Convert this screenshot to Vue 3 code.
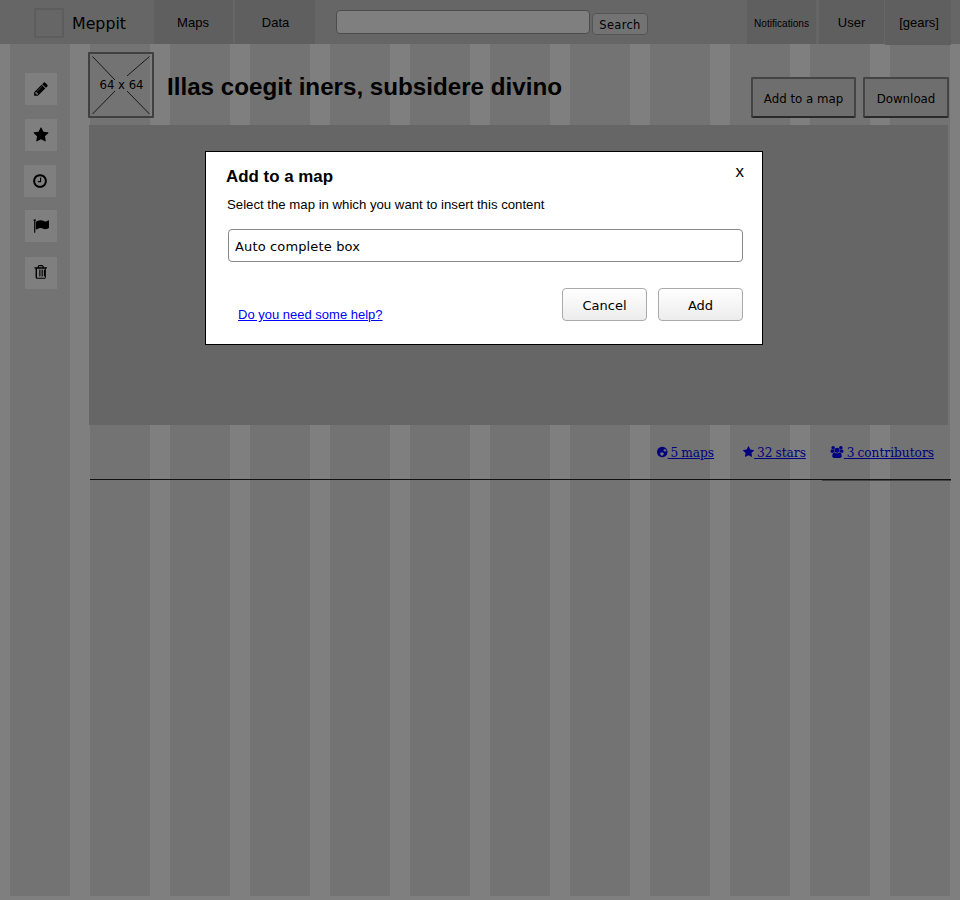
<script setup>
const tools = [
  { k: 'pencil', vb: '0 0 1792 1792', d: 'M491 1536l91-91-235-235-91 91v107h128v128h107zm523-928q0-22-22-22-10 0-17 7l-542 542q-7 7-7 17 0 22 22 22 10 0 17-7l542-542q7-7 7-17zm-54-192l416 416-832 832h-416v-416zm683 96q0 53-37 90l-166 166-416-416 166-165q36-38 90-38 53 0 91 38l235 234q37 39 37 91z' },
  { k: 'star', vb: '0 0 1792 1792', d: 'M1728 647q0 22-26 48l-363 354 86 500q1 7 1 20 0 21-10.500 35.500t-30.500 14.500q-19 0-40-12l-449-236-449 236q-22 12-40 12-21 0-31.500-14.500t-10.500-35.500q0-6 2-20l86-500-364-354q-25-27-25-48 0-37 56-46l502-73 225-455q19-41 49-41t49 41l225 455 502 73q56 9 56 46z' },
  { k: 'clock', vb: '0 0 1792 1792', d: 'M1024 544v448q0 14-9 23t-23 9h-320q-14 0-23-9t-9-23v-64q0-14 9-23t23-9h224v-352q0-14 9-23t23-9h64q14 0 23 9t9 23zm416 352q0-148-73-273t-198-198-273-73-273 73-198 198-73 273 73 273 198 198 273 73 273-73 198-198 73-273zm224 0q0 209-103 385.500t-279.500 279.500-385.500 103-385.500-103-279.500-279.500-103-385.500 103-385.500 279.500-279.500 385.500-103 385.500 103 279.500 279.500 103 385.500z' },
  { k: 'flag', vb: '0 0 1792 1792', d: 'M320 256q0 72-64 110v1266q0 13-9.500 22.500t-22.500 9.500h-64q-13 0-22.500-9.500t-9.500-22.500v-1266q-64-38-64-110 0-53 37.500-90.500t90.500-37.500 90.500 37.500 37.500 90.500zm1472 64v763q0 25-12.500 38.500t-39.500 27.500q-215 116-369 116-61 0-123.500-22t-108.500-48-115.500-48-142.500-22q-192 0-464 146-17 9-33 9-26 0-45-19t-19-45v-742q0-32 31-55 21-14 79-43 236-120 421-120 107 0 200 29t219 88q38 19 88 19 54 0 117.500-21t110-47 88-47 54.500-21q26 0 45 19t19 45z' },
  { k: 'trash', vb: '-192 0 1792 1792', d: 'M512 1248v-704q0-14 9-23t23-9h64q14 0 23 9t9 23v704q0 14-9 23t-23 9h-64q-14 0-23-9t-9-23zm256 0v-704q0-14 9-23t23-9h64q14 0 23 9t9 23v704q0 14-9 23t-23 9h-64q-14 0-23-9t-9-23zm256 0v-704q0-14 9-23t23-9h64q14 0 23 9t9 23v704q0 14-9 23t-23 9h-64q-14 0-23-9t-9-23zm-576-992h448l-48-117q-7-9-17-11h-317q-10 2-17 11zm928 32v64q0 14-9 23t-23 9h-96v948q0 83-47 143.500t-113 60.500h-832q-66 0-113-58.500t-47-141.500v-952h-96q-14 0-23-9t-9-23v-64q0-14 9-23t23-9h309l70-167q15-37 54-63t79-26h320q40 0 79 26t54 63l70 167h309q14 0 23 9t9 23zM256 416v948q0 22 7 40.500t14.500 27 10.500 8.500h832q3 0 10.500-8.500t14.500-27 7-40.500v-948z' }
]
const stats = [
  { k: 'globe', label: '5 maps', w: 10.5, h: 12, vb: '128 128 1536 1536', d: 'M896 128q209 0 385.500 103t279.500 279.500 103 385.500-103 385.500-279.500 279.500-385.500 103-385.500-103-279.500-279.500-103-385.500 103-385.500 279.500-279.500 385.500-103zM1100 1050l-200 -120 -260 60 -90 190 210 240 150 90 60 -160 170 -140zM1250 480l-130 80 -40 170 180 110 180 -60 100 -60q-60 -160 -180 -240z' },
  { k: 'star', label: '32 stars', w: 11, h: 12, vb: '64 128 1664 1536', d: 'M1728 647q0 22-26 48l-363 354 86 500q1 7 1 20 0 21-10.500 35.500t-30.500 14.500q-19 0-40-12l-449-236-449 236q-22 12-40 12-21 0-31.500-14.500t-10.500-35.500q0-6 2-20l86-500-364-354q-25-27-25-48 0-37 56-46l502-73 225-455q19-41 49-41t49 41l225 455 502 73q56 9 56 46z' },
  { k: 'group', label: '3 contributors', w: 14, h: 12, vb: '-64 0 1920 1792', d: 'M529 896q-162 5-265 128h-134q-82 0-138-40.500t-56-118.500q0-353 124-353 6 0 43.500 21t97.500 42.500 119 21.500q67 0 133-23-5 37-5 66 0 139 81 256zm1071 637q0 120-73 189.500t-194 69.500h-874q-121 0-194-69.500t-73-189.500q0-53 3.500-103.500t14-109 26.500-108.500 43-97.500 62-81 85.500-53.500 111.500-20q10 0 43 21.500t73 48 107 48 135 21.500 135-21.500 107-48 73-48 43-21.500q61 0 111.500 20t85.500 53.500 62 81 43 97.500 26.500 108.500 14 109 3.500 103.500zm-1024-1277q0 106-75 181t-181 75-181-75-75-181 75-181 181-75 181 75 75 181zm704 384q0 159-112.500 271.500t-271.500 112.500-271.500-112.500-112.500-271.500 112.500-271.500 271.500-112.500 271.500 112.500 112.500 271.500zm576 225q0 78-56 118.500t-138 40.500h-134q-103-123-265-128 81-117 81-256 0-29-5-66 66 23 133 23 59 0 119-21.500t97.500-42.500 43.500-21q124 0 124 353zm-128-609q0 106-75 181t-181 75-181-75-75-181 75-181 181-75 181 75 75 181z' }
]
</script>

<template>
  <div class="page">
    <header class="topbar">
      <div class="logo"></div>
      <span class="brand">Meppit</span>
      <nav class="mainnav">
        <a class="tab tab-maps">Maps</a>
        <a class="tab tab-data">Data</a>
      </nav>
      <form class="search" @submit.prevent>
        <input class="search-input" type="text" />
        <button class="search-btn">Search</button>
      </form>
      <nav class="usernav">
        <a class="tab tab-notif">Notifications</a>
        <a class="tab tab-user">User</a>
        <a class="tab tab-gears">[gears]</a>
      </nav>
    </header>

    <div class="body">
      <aside class="tools">
        <div v-for="t in tools" :key="t.k" class="tool" :class="'tool-' + t.k">
          <svg width="16" height="16" :viewBox="t.vb"><path :d="t.d" fill="#000" fill-rule="evenodd" /></svg>
        </div>
      </aside>

      <main class="main">
        <div class="head">
          <div class="thumb">
            <svg class="thumb-x" width="62" height="62" viewBox="0 0 62 62">
              <path d="M2.500 2.500 L25 26 M59.500 2.500 L37 22 M25 37 L2.500 60 M37 37 L59.500 60" stroke="#333" stroke-width="1" fill="none" />
            </svg>
            <span>64 x 64</span>
          </div>
          <h1 class="title">Illas coegit iners, subsidere divino</h1>
          <div class="actions">
            <button class="sketch sketch-add">Add to a map</button>
            <button class="sketch sketch-dl">Download</button>
          </div>
        </div>
        <div class="panel"></div>
        <div class="stats">
          <a v-for="s in stats" :key="s.k" href="#" class="stat" :class="'stat-' + s.k">
            <svg :width="s.w" :height="s.h" :viewBox="s.vb"><path :d="s.d" fill="#00f" fill-rule="evenodd" /></svg>
            {{ s.label }}
          </a>
        </div>
        <hr class="rule" />
      </main>
    </div>

    <div class="overlay">
      <section class="modal">
        <div class="modal-head">
          <h2 class="modal-title">Add to a map</h2>
          <span class="close">x</span>
        </div>
        <p class="modal-text">Select the map in which you want to insert this content</p>
        <div class="auto">Auto complete box</div>
        <div class="modal-foot">
          <a href="#" class="help">Do you need some help?</a>
          <div class="modal-btns">
            <button class="mbtn">Cancel</button>
            <button class="mbtn">Add</button>
          </div>
        </div>
      </section>
    </div>
  </div>
</template>

<style>
html, body { margin: 0; background: #fff; }
</style>

<style scoped>
.page {
  position: relative;
  width: 960px;
  height: 900px;
  overflow: hidden;
  font-family: "Liberation Sans", Arial, sans-serif;
  background-color: #fff;
  background-image: linear-gradient(90deg, #fff 0, #fff 10px, #e6e6e6 10px, #e6e6e6 70px, #fff 70px, #fff 80px);
  background-size: 80px 852px;
  background-position: 0 44px;
  background-repeat: repeat-x;
}
.topbar {
  display: flex;
  align-items: flex-start;
  height: 44px;
  background: #ccc;
}
.logo {
  width: 26px;
  height: 26px;
  margin: 8px 0 0 34px;
  border: 2px solid #bbb;
}
.brand {
  margin: 14px 0 0 8px;
  width: 82px;
  font: 15.8px "DejaVu Sans", sans-serif;
  line-height: 20px;
}
.mainnav { display: flex; gap: 2px; }
.usernav { display: flex; gap: 3px; margin-left: 99px; }
.tab {
  display: block;
  box-sizing: border-box;
  height: 44px;
  line-height: 45px;
  text-align: center;
  font-size: 13px;
  background: #bebebe;
  color: #000;
}
.tab-maps { width: 79px; padding-right: 1px; }
.tab-data { width: 80px; padding-left: 1px; }
.tab-notif { width: 69px; font-size: 10.1px; line-height: 47px; }
.tab-user { width: 65px; }
.tab-gears { width: 66px; height: 45px; margin-left: -2px; padding-left: 2px; }
.search { display: flex; align-items: flex-start; margin-left: 21px; gap: 2px; }
.search-input {
  box-sizing: border-box;
  width: 254px;
  height: 24px;
  margin-top: 10px;
  padding: 0;
  background: #fff;
  border: 1px solid #999;
  border-radius: 4px;
}
.search-btn {
  box-sizing: border-box;
  width: 56px;
  height: 22px;
  margin-top: 13px;
  padding: 2px 0 0;
  font: 11.5px "DejaVu Sans", sans-serif;
  letter-spacing: .3px;
  color: #000;
  background: #e6e6e6;
  border: 1px solid #aaa;
  border-radius: 4px;
}
.body { display: flex; }
.tools {
  display: flex;
  flex-direction: column;
  width: 88px;
  padding-top: 29px;
  box-sizing: border-box;
  flex: none;
}
.tool {
  display: flex;
  align-items: center;
  justify-content: center;
  width: 32px;
  height: 32px;
  margin: 0 0 14px 25px;
  background: #fff;
}
.tool-clock { margin-left: 24px; }
.tool-flag { margin-top: -1px; }
.tool-trash { margin-top: 1px; }
.main { width: 864px; flex: none; }
.head {
  display: flex;
  align-items: flex-start;
  height: 81px;
}
.thumb {
  position: relative;
  box-sizing: border-box;
  width: 66px;
  height: 66px;
  margin-top: 8px;
  border: 2px solid #808080;
  border-radius: 1px;
  display: flex;
  align-items: center;
  justify-content: center;
  padding-left: 1px;
}
.thumb-x { position: absolute; left: 0; top: 0; }
.thumb span {
  position: relative;
  font: 13px "DejaVu Sans Condensed", "DejaVu Sans", sans-serif;
  line-height: 16px;
  color: #000;
  white-space: nowrap;
}
.title {
  margin: 29px 0 0 13px;
  width: 584px;
  font-size: 24.18px;
  line-height: 28px;
  font-weight: bold;
  white-space: nowrap;
  color: #000;
}
.actions { display: flex; gap: 7px; margin-top: 33px; }
.sketch {
  box-sizing: border-box;
  height: 41px;
  padding: 2px 0 0;
  font: 11.8px "DejaVu Sans", sans-serif;
  background: #ddd;
  color: #000;
  border: 2px solid #888;
  border-bottom-color: #555;
  border-radius: 2px;
}
.sketch-add { width: 105px; }
.sketch-dl { width: 86px; }
.panel {
  width: 859px;
  height: 300px;
  margin-left: 1px;
  background: #ccc;
}
.stats {
  display: flex;
  justify-content: flex-end;
  gap: 24px;
  height: 54px;
  width: 846px;
  padding-top: 21px;
  box-sizing: border-box;
}
.stat {
  font: 12.2px "DejaVu Serif", serif;
  line-height: 15px;
  word-spacing: -1px;
  color: #00f;
  white-space: nowrap;
}
.stat-star { margin-left: 5px; }
.stat svg { vertical-align: -1px; }
.rule {
  width: 861px;
  height: 2px;
  margin: 0 0 0 2px;
  border: 0;
  background:
    linear-gradient(#222, #222) 0 0 / 100% 1px no-repeat,
    linear-gradient(90deg, transparent 85%, #888 85%) 0 1px / 100% 1px no-repeat;
}
.overlay {
  position: absolute;
  inset: 0;
  background: rgba(0, 0, 0, .5);
}
.modal {
  position: absolute;
  left: 205px;
  top: 151px;
  box-sizing: border-box;
  width: 558px;
  height: 194px;
  padding: 0 19px 0 20px;
  background: #fff;
  border: 1px solid #000;
  color: #000;
}
.modal-head {
  display: flex;
  justify-content: space-between;
  align-items: flex-start;
  height: 44px;
}
.modal-title {
  margin: 15px 0 0;
  font-size: 16.9px;
  line-height: 20px;
  font-weight: bold;
}
.close { margin: 10px -1px 0 0; font-size: 17px; line-height: 20px; }
.modal-text {
  margin: 0 0 0 1px;
  font-size: 13.2px;
  line-height: 18px;
  height: 33px;
}
.auto {
  box-sizing: border-box;
  height: 33px;
  margin-left: 2px;
  padding-left: 6px;
  font: 13px/33px "DejaVu Sans", sans-serif;
  letter-spacing: .14px;
  border: 1px solid #888;
  border-radius: 4px;
}
.modal-foot {
  display: flex;
  justify-content: space-between;
  align-items: flex-start;
  margin-top: 26px;
  margin-left: 12px;
}
.help {
  margin-top: 19px;
  font-size: 13px;
  line-height: 15px;
  color: #00f;
}
.modal-btns { display: flex; gap: 11px; }
.mbtn {
  box-sizing: border-box;
  width: 85px;
  height: 33px;
  padding: 2px 0 0;
  font: 13px "DejaVu Sans", sans-serif;
  color: #000;
  background: linear-gradient(#fff, #ececec);
  border: 1px solid #aaa;
  border-radius: 4px;
}
</style>
